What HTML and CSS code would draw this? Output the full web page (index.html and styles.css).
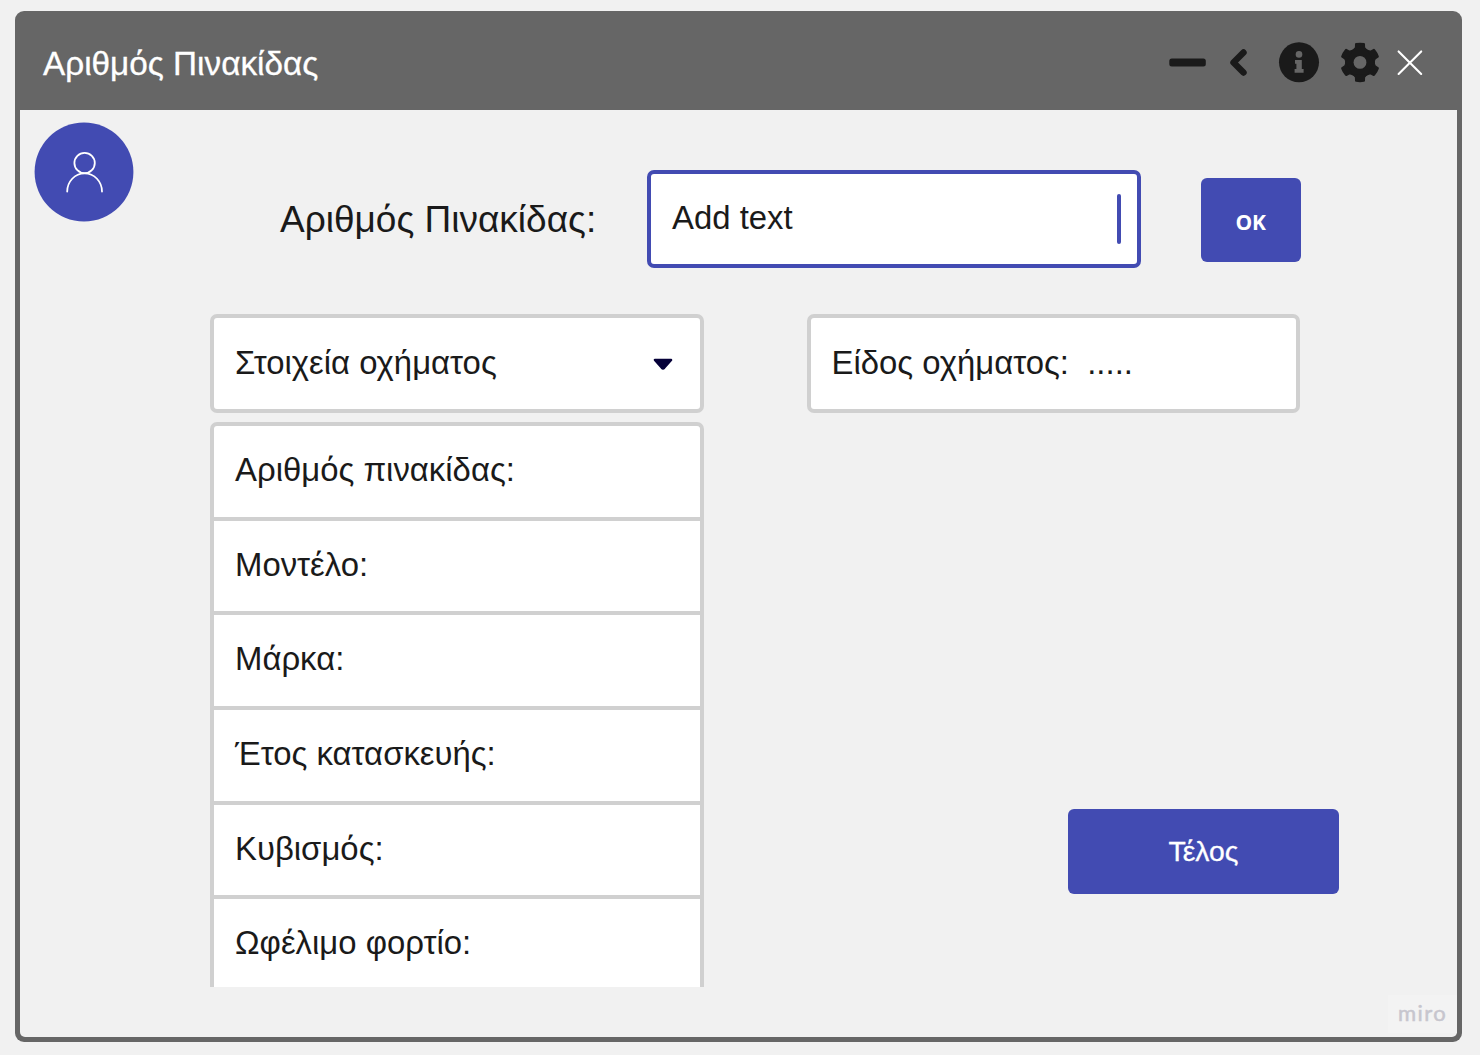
FILE: index.html
```html
<!DOCTYPE html>
<html lang="el">
<head>
<meta charset="utf-8">
<title>Αριθμός Πινακίδας</title>
<link rel="stylesheet" href="styles.css">
</head>
<body>
<div class="window">
  <header class="titlebar">
    <h1 class="title">Αριθμός Πινακίδας</h1>
    <svg class="controls" width="262" height="50" viewBox="1165 38 262 50">
      <rect x="1169.3" y="58.6" width="36.5" height="7.8" rx="2.5" fill="#1a1a1a"/>
      <path d="M1243.5 52.5 L1233.5 62.5 L1243.5 72.5" fill="none" stroke="#1a1a1a" stroke-width="6.400" stroke-linejoin="round" stroke-linecap="round"/>
      <circle cx="1299" cy="62.3" r="20" fill="#1a1a1a"/>
      <circle cx="1299" cy="54.4" r="3.3" fill="#666"/>
      <path d="M1295 60h6.8v9h1.8v3.8h-9v-3.8h1.8v-5.2h-1.4z" fill="#666"/>
      <g fill="#1a1a1a">
        <circle cx="1360" cy="62.4" r="15"/>
        <path id="tooth" d="M1352.800 50 L1354.900 47.200 L1355 44.100 Q1355.100 43.200 1356 43 Q1360 42.300 1364 43 Q1364.900 43.200 1365 44.100 L1365.100 47.200 L1367.200 50z"/>
        <use href="#tooth" transform="rotate(60 1360 62.4)"/>
        <use href="#tooth" transform="rotate(120 1360 62.4)"/>
        <use href="#tooth" transform="rotate(180 1360 62.4)"/>
        <use href="#tooth" transform="rotate(240 1360 62.4)"/>
        <use href="#tooth" transform="rotate(300 1360 62.4)"/>
      </g>
      <circle cx="1360" cy="62.4" r="6.4" fill="#666"/>
      <path d="M1398.6 51.4l22.6 22.6m0-22.6l-22.6 22.6" stroke="#fff" stroke-width="2.1" stroke-linecap="round"/>
    </svg>
  </header>
  <main class="main">
    <svg class="avatar" width="100" height="100" viewBox="0 0 100 100">
      <circle cx="50" cy="50" r="49.4" fill="#424bb2"/>
      <g fill="none" stroke="#fff" stroke-width="1.8" stroke-linecap="round">
        <circle cx="50.6" cy="41" r="10.2"/>
        <path d="M33.2 69.6c0-10 7.6-18.2 17.4-18.2s17.4 8.200 17.4 18.200"/>
      </g>
    </svg>
    <div class="content">
      <div class="search">
        <label class="label">Αριθμός Πινακίδας:</label>
        <div class="box active"><span class="text">Add text</span><span class="caret"></span></div>
        <button class="btn ok">OK</button>
      </div>
      <div class="columns">
        <div class="left">
          <div class="box">
            <span class="text">Στοιχεία οχήματος</span>
            <svg class="arrow" width="20" height="13" viewBox="0 0 20 13"><path d="M1.900 2H18.100L11.200 9.800Q10 11 8.800 9.800z" fill="#050038" stroke="#050038" stroke-width="2.400" stroke-linejoin="round"/></svg>
          </div>
          <div class="list">
            <div class="item"><span class="text">Αριθμός πινακίδας:</span></div>
            <div class="item"><span class="text">Μοντέλο:</span></div>
            <div class="item"><span class="text">Μάρκα:</span></div>
            <div class="item"><span class="text">Έτος κατασκευής:</span></div>
            <div class="item"><span class="text">Κυβισμός:</span></div>
            <div class="item"><span class="text">Ωφέλιμο φορτίο:</span></div>
          </div>
        </div>
        <div class="right">
          <div class="box"><span class="text">Είδος οχήματος:&nbsp; .....</span></div>
          <button class="btn end">Τέλος</button>
        </div>
      </div>
    </div>
    <div class="brand">miro</div>
  </main>
</div>
</body>
</html>
```
FILE: styles.css
```css
* { box-sizing: border-box; }
body {
  margin: 0;
  height: 1055px;
  padding: 10.500px 18px 13.500px 15px;
  background: #f1f1f1;
  color: #1a1a1a;
  font-family: "Liberation Sans", Arial, sans-serif;
}
.window {
  height: 1031px;
  display: flex;
  flex-direction: column;
  background: #666;
  border-radius: 9px;
  padding: 0 5px 5px;
}
.titlebar {
  height: 99.500px;
  flex: none;
  display: flex;
  justify-content: space-between;
  align-items: flex-start;
  padding: 27.500px 30px 0 23px;
}
.title {
  margin: 6px 0 0;
  font-size: 33.300px;
  line-height: 40px;
  font-weight: 400;
  color: #fff;
  -webkit-text-stroke: 0.300px #fff;
  white-space: nowrap;
}
.main {
  position: relative;
  flex: 1;
  display: flex;
  background: #f1f1f1;
  border-radius: 0 0 5px 5px;
}
.avatar { flex: none; margin: 12px 76px 0 14px; }
.content { width: 1130px; padding-top: 59.500px; }
.search { display: flex; align-items: flex-start; padding-left: 70px; height: 144.500px; }
.label { width: 367px; font-size: 37px; line-height: 44px; padding-top: 28px; white-space: nowrap; }
.box {
  width: 493.500px;
  height: 98.500px;
  border: 4px solid #d0d0d0;
  border-radius: 7px;
  background: #fff;
  display: flex;
  align-items: center;
  justify-content: space-between;
  padding: 0 27px 1px 21px;
}
.active { border-color: #424bb2; padding: 0 16px 2px 21px; }
.text { font-size: 32.880px; line-height: 40px; white-space: nowrap; }
.caret { width: 4px; height: 50px; border-radius: 2px; background: #424bb2; margin-top: 2px; }
.arrow { margin-top: 3px; }
.btn {
  border: 0;
  padding: 0;
  border-radius: 6px;
  background: #424bb2;
  color: #fff;
  font-family: inherit;
}
.ok {
  width: 100.500px;
  height: 84.500px;
  margin: 8px 0 0 60px;
  padding-top: 4px;
  font: 700 21px "Open Sans", sans-serif;
}
.columns { display: flex; gap: 102.500px; }
.left { width: 494px; }
.list {
  width: 493.500px;
  margin-top: 9.500px;
  height: 564.500px;
  overflow: hidden;
  background: #fff;
  border: 4px solid #d0d0d0;
  border-bottom: 0;
  border-radius: 7px 7px 0 0;
}
.item {
  height: 94.700px;
  border-bottom: 4px solid #d0d0d0;
  display: flex;
  align-items: center;
  padding: 0 0 3px 21px;
}
.right { flex: 1; }
.end {
  display: block;
  width: 271px;
  height: 84.500px;
  margin: 396.500px 0 0 261.500px;
  font-size: 28.300px;
  -webkit-text-stroke: 0.300px #fff;
}
.brand {
  position: absolute;
  right: 0;
  bottom: 4px;
  width: 69px;
  height: 38px;
  padding-left: 10px;
  background: #f3f3f3;
  color: #c7c6ce;
  font: 400 22px/36px Lato, sans-serif;
  -webkit-text-stroke: 0.500px #c7c6ce;
  letter-spacing: 1.400px;
}
```
